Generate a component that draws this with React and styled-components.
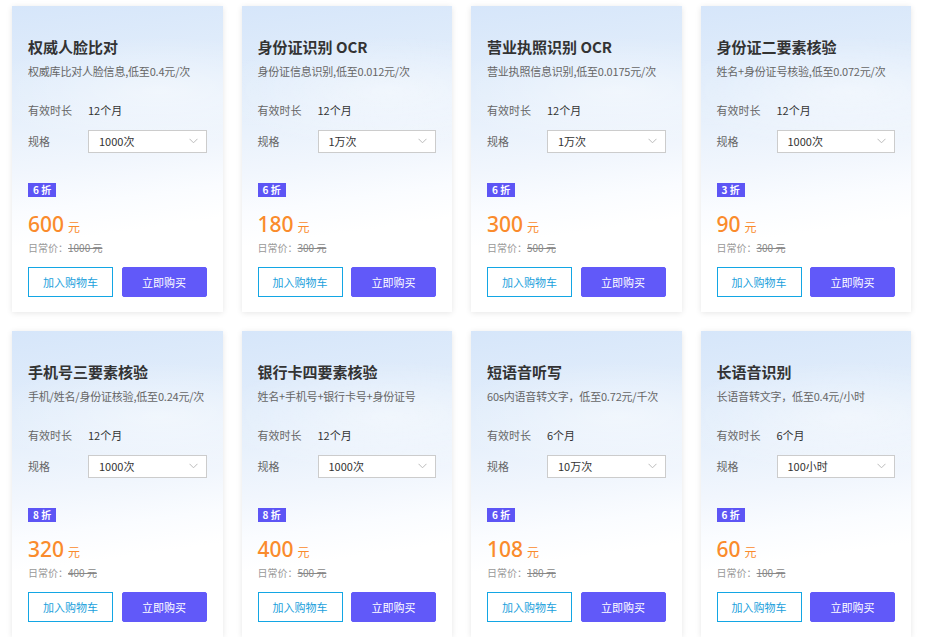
import React from "react";
import styled, { createGlobalStyle } from "styled-components";

const GlobalStyle = createGlobalStyle`
  body {
    margin: 0;
    background: #fff;
    font-family: "Noto Sans CJK SC", "Noto Sans", sans-serif;
  }
`;

const products = [
  { title: "权威人脸比对", desc: "权威库比对人脸信息,低至0.4元/次", period: "12个月", spec: "1000次", discount: "6 折", price: "600", old: "1000 元" },
  { title: "身份证识别 OCR", desc: "身份证信息识别,低至0.012元/次", period: "12个月", spec: "1万次", discount: "6 折", price: "180", old: "300 元" },
  { title: "营业执照识别 OCR", desc: "营业执照信息识别,低至0.0175元/次", period: "12个月", spec: "1万次", discount: "6 折", price: "300", old: "500 元" },
  { title: "身份证二要素核验", desc: "姓名+身份证号核验,低至0.072元/次", period: "12个月", spec: "1000次", discount: "3 折", price: "90", old: "300 元" },
  { title: "手机号三要素核验", desc: "手机/姓名/身份证核验,低至0.24元/次", period: "12个月", spec: "1000次", discount: "8 折", price: "320", old: "400 元" },
  { title: "银行卡四要素核验", desc: "姓名+手机号+银行卡号+身份证号", period: "12个月", spec: "1000次", discount: "8 折", price: "400", old: "500 元" },
  { title: "短语音听写", desc: "60s内语音转文字，低至0.72元/千次", period: "6个月", spec: "10万次", discount: "6 折", price: "108", old: "180 元" },
  { title: "长语音识别", desc: "长语音转文字，低至0.4元/小时", period: "6个月", spec: "100小时", discount: "6 折", price: "60", old: "100 元" },
];

const Grid = styled.div`
  display: grid;
  grid-template-columns: repeat(4, 210.5px);
  column-gap: 19px;
  row-gap: 19px;
  padding: 6px 0 0 12px;
`;

const Card = styled.div`
  height: 306px;
  box-sizing: border-box;
  padding: 31px 16px 15px;
  display: flex;
  flex-direction: column;
  background:
    radial-gradient(ellipse 140% 30% at 70% 28%, rgba(255, 255, 255, 0.45), rgba(255, 255, 255, 0) 60%),
    linear-gradient(172deg, #d6e6fa 0%, #e3eefb 28%, #f1f6fd 50%, #fafcff 62%, #ffffff 72%);
  box-shadow: 0 1px 6px rgba(0, 0, 0, 0.1);
`;

const Title = styled.div`
  font-size: 15px;
  line-height: 20px;
  font-weight: 700;
  color: #333;
`;

const Desc = styled.div`
  margin-top: 6px;
  font-size: 11px;
  line-height: 16px;
  color: #666;
  white-space: nowrap;
  letter-spacing: -0.2px;
`;

const Row = styled.div`
  display: flex;
  align-items: center;
  margin-top: ${(p) => p.$gap}px;
  height: ${(p) => p.$h}px;
  font-size: 11px;
  color: #555;
`;

const Label = styled.span`
  width: 60px;
  flex-shrink: 0;
  color: #666;
`;

const Value = styled.span`
  color: #333;
`;

const Select = styled.div`
  flex: 1;
  height: 23px;
  box-sizing: border-box;
  border: 1px solid #ccc;
  background: #fff;
  display: flex;
  align-items: center;
  justify-content: space-between;
  padding: 0 8px 0 10px;
  font-size: 11px;
  color: #333;
`;

const Badge = styled.div`
  align-self: flex-start;
  margin-top: 30px;
  height: 14px;
  padding: 0 5px;
  background: #5d55f5;
  color: #fff;
  font-size: 10px;
  line-height: 14px;
  font-weight: 700;
`;

const Price = styled.div`
  margin-top: 13px;
  height: 26px;
  display: flex;
  align-items: baseline;
  color: #fa8b2c;
  font-family: "Noto Sans", sans-serif;
  font-size: 21px;
  font-weight: 500;
`;

const Unit = styled.span`
  margin-left: 4px;
  font-family: "Noto Sans CJK SC", sans-serif;
  font-size: 12px;
  font-weight: 400;
`;

const OldPrice = styled.div`
  margin-top: 5px;
  font-size: 10px;
  line-height: 14px;
  color: #999;
  s {
    color: #888;
  }
`;

const Buttons = styled.div`
  margin-top: auto;
  display: flex;
  justify-content: space-between;
`;

const Button = styled.button`
  width: 85px;
  height: 30px;
  box-sizing: border-box;
  font-family: inherit;
  font-size: 11px;
  cursor: pointer;
  border: 1px solid ${(p) => (p.$primary ? "#6159f9" : "#13a6e4")};
  border-radius: ${(p) => (p.$primary ? "2px" : "0")};
  background: ${(p) => (p.$primary ? "#6159f9" : "#fff")};
  color: ${(p) => (p.$primary ? "#fff" : "#1a9fdc")};
`;

const Chevron = () => (
  <svg width="9" height="6" viewBox="0 0 9 6" fill="none">
    <path d="M0.5 0.8 L4.5 4.8 L8.5 0.8" stroke="#bbb" strokeWidth="1" />
  </svg>
);

const ProductCard = ({ p }) => (
  <Card>
    <Title>{p.title}</Title>
    <Desc>{p.desc}</Desc>
    <Row $gap={23} $h={16}>
      <Label>有效时长</Label>
      <Value>{p.period}</Value>
    </Row>
    <Row $gap={11} $h={24}>
      <Label>规格</Label>
      <Select>
        <span>{p.spec}</span>
        <Chevron />
      </Select>
    </Row>
    <Badge>{p.discount}</Badge>
    <Price>
      {p.price}
      <Unit>元</Unit>
    </Price>
    <OldPrice>
      日常价：<s>{p.old}</s>
    </OldPrice>
    <Buttons>
      <Button>加入购物车</Button>
      <Button $primary>立即购买</Button>
    </Buttons>
  </Card>
);

export default function App() {
  return (
    <>
      <GlobalStyle />
      <Grid>
        {products.map((p) => (
          <ProductCard key={p.title} p={p} />
        ))}
      </Grid>
    </>
  );
}
